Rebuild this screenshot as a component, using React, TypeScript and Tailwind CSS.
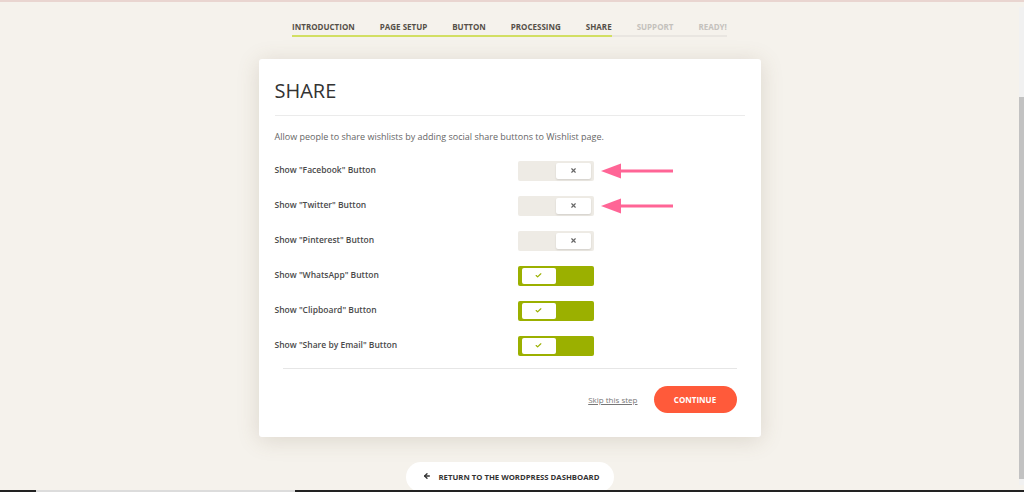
import { Check, X, ArrowLeft } from 'lucide-react';

const steps = [
  { name: 'INTRODUCTION', done: true },
  { name: 'PAGE SETUP', done: true },
  { name: 'BUTTON', done: true },
  { name: 'PROCESSING', done: true },
  { name: 'SHARE', done: true },
  { name: 'SUPPORT', done: false },
  { name: 'READY!', done: false },
];

const options = [
  { label: 'Show "Facebook" Button', on: false, arrow: true },
  { label: 'Show "Twitter" Button', on: false, arrow: true },
  { label: 'Show "Pinterest" Button', on: false, arrow: false },
  { label: 'Show "WhatsApp" Button', on: true, arrow: false },
  { label: 'Show "Clipboard" Button', on: true, arrow: false },
  { label: 'Show "Share by Email" Button', on: true, arrow: false },
];

function Toggle({ on }: { on: boolean }) {
  if (on) {
    return (
      <div className="flex h-[20px] w-[76px] items-center rounded-[2px] bg-[#9bb000] pl-[4px]">
        <div className="flex h-[16px] w-[34px] items-center justify-center rounded-[2px] bg-white">
          <Check className="h-[7px] w-[7px] text-[#9bb000]" strokeWidth={4} />
        </div>
      </div>
    );
  }
  return (
    <div className="flex h-[20px] w-[76px] items-center justify-end rounded-[2px] bg-[#eeebe5] pr-[3px]">
      <div className="flex h-[16px] w-[35px] items-center justify-center rounded-[2px] bg-white shadow-[0_1px_2px_rgba(0,0,0,0.12)]">
        <X className="h-[7px] w-[7px] text-[#666]" strokeWidth={4} />
      </div>
    </div>
  );
}

function PinkArrow() {
  return (
    <svg width="72" height="16" viewBox="0 0 72 16" className="ml-[7px]">
      <path d="M0 8 L20 0.5 L20 15.5 Z" fill="#ff6596" />
      <rect x="18" y="6.5" width="54" height="3" fill="#ff6596" />
    </svg>
  );
}

export default function App() {
  return (
    <div className="relative flex h-[492px] w-full overflow-hidden bg-[#f5f2ec] font-['Open_Sans',sans-serif]">
      <div className="absolute left-0 right-0 top-0 h-[2px] bg-[#e9d5d0]" />

      <main className="flex flex-1 flex-col items-center pt-[2px]">
        {/* Steps */}
        <nav className="flex pt-[19px]">
          {steps.map((step, i) => (
            <span
              key={step.name}
              className={`border-b-2 pb-[3px] text-[8px] font-bold leading-[11px] ${
                i === 0 ? '' : 'pl-[25px]'
              } ${
                step.done
                  ? 'border-[#d2df63] text-[#555048]'
                  : 'border-[#e9e6e1] text-[#c4c1bc]'
              }`}
            >
              {step.name}
            </span>
          ))}
        </nav>

        {/* Card */}
        <section className="mt-[22px] w-[502px] rounded-[3px] bg-white px-[16px] pb-[24px] pt-[18px] shadow-[0_3px_22px_rgba(110,90,60,0.18)]">
          <h1 className="text-[20px] font-normal leading-[28px] text-[#333]">SHARE</h1>
          <div className="mt-[10px] h-px bg-[#ebebeb]" />
          <p className="mt-[15px] text-[9px] leading-[12px] text-[#666]">
            Allow people to share wishlists by adding social share buttons to Wishlist page.
          </p>

          <div className="mt-[10px] flex flex-col">
            {options.map((opt) => (
              <div key={opt.label} className="flex h-[35px] items-center">
                <span className="w-[243px] text-[8.5px] font-semibold text-[#4a4a4a]">{opt.label}</span>
                <Toggle on={opt.on} />
                {opt.arrow && <PinkArrow />}
              </div>
            ))}
          </div>

          <div className="mx-[8px] mt-[5px] h-px bg-[#e6e6e6]" />

          <div className="mr-[8px] mt-[17px] flex items-center justify-end gap-[16px]">
            <a className="text-[8px] text-[#777] underline">Skip this step</a>
            <button className="flex h-[27px] w-[83px] items-center justify-center rounded-full bg-[#ff5a3a] text-[8px] font-bold text-white">
              CONTINUE
            </button>
          </div>
        </section>

        <button className="mt-[25px] flex h-[36px] w-[208px] items-start gap-[8px] rounded-full bg-white pl-[17px] pt-[10px] text-[7.75px] font-bold text-[#333]">
          <ArrowLeft className="h-[8px] w-[8px]" strokeWidth={4} />
          RETURN TO THE WORDPRESS DASHBOARD
        </button>
      </main>

      {/* Scrollbar */}
      <div className="mt-[7px] flex h-[478px] w-[5px] flex-col bg-[#f1f1f1]">
        <div className="mt-[90px] h-[382px] w-full bg-[#c2c2c2]" />
      </div>

      {/* Bottom strip */}
      <div className="absolute bottom-0 left-0 right-0 flex h-[2px]">
        <div className="w-[36px] bg-[#222]" />
        <div className="w-[259px] bg-[#dcdcdc]" />
        <div className="flex-1 bg-[#222]" />
      </div>
    </div>
  );
}
